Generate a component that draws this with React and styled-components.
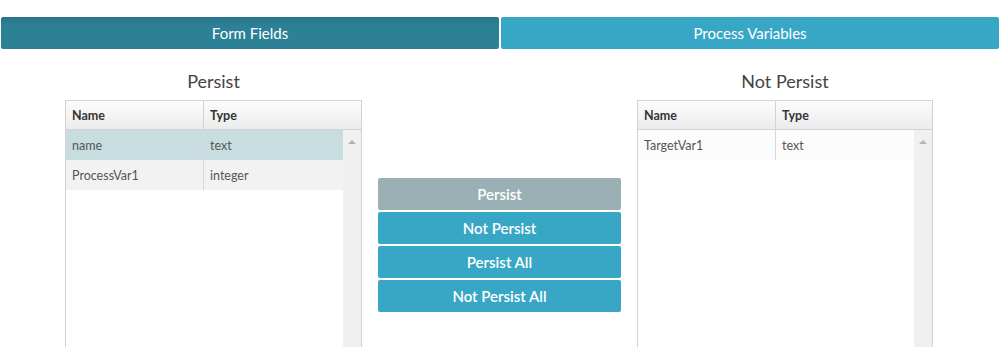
import React from "react"
import styled, { createGlobalStyle } from "styled-components"

const GlobalStyle = createGlobalStyle`
  body {
    margin: 0;
    background: #fff;
    font-family: Lato, "Open Sans", Arial, sans-serif;
  }
`

const Page = styled.div`
  width: 1000px;
  height: 347px;
  overflow: hidden;
`

const Tabs = styled.div`
  display: flex;
  gap: 2px;
  padding: 17px 1px 0;
`

const Tab = styled.div`
  flex: 1;
  height: 32px;
  display: flex;
  align-items: center;
  justify-content: center;
  border-radius: 2px;
  color: #fff;
  font-size: 15px;
  background: ${p => (p.active ? "linear-gradient(#287589, #2c8197 30%)" : "#38a7c5")};
`

const Body = styled.div`
  display: flex;
  align-items: flex-start;
  padding-left: 65px;
  margin-top: 22px;
  gap: 16px;
`

const Column = styled.div`
  width: ${p => p.width}px;
  display: flex;
  flex-direction: column;
`

const Title = styled.div`
  text-align: center;
  font-size: 18px;
  color: #444;
  height: 29px;
  line-height: 20px;
`

const Grid = styled.div`
  border: 1px solid #d2d2d2;
  height: 260px;
  display: flex;
  flex-direction: column;
`

const HeaderRow = styled.div`
  display: grid;
  grid-template-columns: ${p => p.split}px 1fr;
  height: 28px;
  background: linear-gradient(#fcfcfc, #ececec);
  border-bottom: 1px solid #d2d2d2;
`

const HeaderCell = styled.div`
  display: flex;
  align-items: center;
  padding-left: 6px;
  font-size: 12.5px;
  font-weight: 700;
  color: #333;
  & + & {
    border-left: 1px solid #d2d2d2;
  }
`

const GridBody = styled.div`
  flex: 1;
  display: flex;
`

const Rows = styled.div`
  flex: 1;
`

const Row = styled.div`
  display: grid;
  grid-template-columns: ${p => p.split}px 1fr;
  height: 30px;
  background: ${p => (p.selected ? "#c8dde0" : p.alt ? "#f2f2f2" : "#fcfcfc")};
`

const Cell = styled.div`
  display: flex;
  align-items: center;
  padding-left: 6px;
  font-size: 12.5px;
  color: #555;
  & + & {
    border-left: 1px solid #d8d8d8;
  }
`

const Scrollbar = styled.div`
  width: 18px;
  background: #f0f0f0;
  display: flex;
  justify-content: center;
  padding-top: 10px;
  box-sizing: border-box;
`

const Arrow = styled.div`
  width: 0;
  height: 0;
  border-left: 4px solid transparent;
  border-right: 4px solid transparent;
  border-bottom: 4px solid #b4b4b4;
`

const Actions = styled.div`
  width: 243px;
  margin-top: 107px;
  display: flex;
  flex-direction: column;
  gap: 2px;
`

const ActionButton = styled.button`
  height: 32px;
  border: 0;
  border-radius: 2px;
  color: #fff;
  font-family: Lato, sans-serif;
  font-size: 15px;
  font-weight: 600;
  background: ${p => (p.disabled ? "#9ab0b5" : "#38a7c5")};
  cursor: pointer;
`

const VariableGrid = ({ title, width, split, rows }) => (
  <Column width={width}>
    <Title>{title}</Title>
    <Grid>
      <HeaderRow split={split}>
        <HeaderCell>Name</HeaderCell>
        <HeaderCell>Type</HeaderCell>
      </HeaderRow>
      <GridBody>
        <Rows>
          {rows.map((r, i) => (
            <Row key={r.name} split={split} selected={r.selected} alt={i % 2 === 1}>
              <Cell>{r.name}</Cell>
              <Cell>{r.type}</Cell>
            </Row>
          ))}
        </Rows>
        <Scrollbar>
          <Arrow />
        </Scrollbar>
      </GridBody>
    </Grid>
  </Column>
)

export default function App() {
  return (
    <Page>
      <GlobalStyle />
      <Tabs>
        <Tab active>Form Fields</Tab>
        <Tab>Process Variables</Tab>
      </Tabs>
      <Body>
        <VariableGrid
          title="Persist"
          width={297}
          split={137}
          rows={[
            { name: "name", type: "text", selected: true },
            { name: "ProcessVar1", type: "integer" }
          ]}
        />
        <Actions>
          <ActionButton disabled>Persist</ActionButton>
          <ActionButton>Not Persist</ActionButton>
          <ActionButton>Persist All</ActionButton>
          <ActionButton>Not Persist All</ActionButton>
        </Actions>
        <VariableGrid
          title="Not Persist"
          width={296}
          split={137}
          rows={[{ name: "TargetVar1", type: "text" }]}
        />
      </Body>
    </Page>
  )
}
